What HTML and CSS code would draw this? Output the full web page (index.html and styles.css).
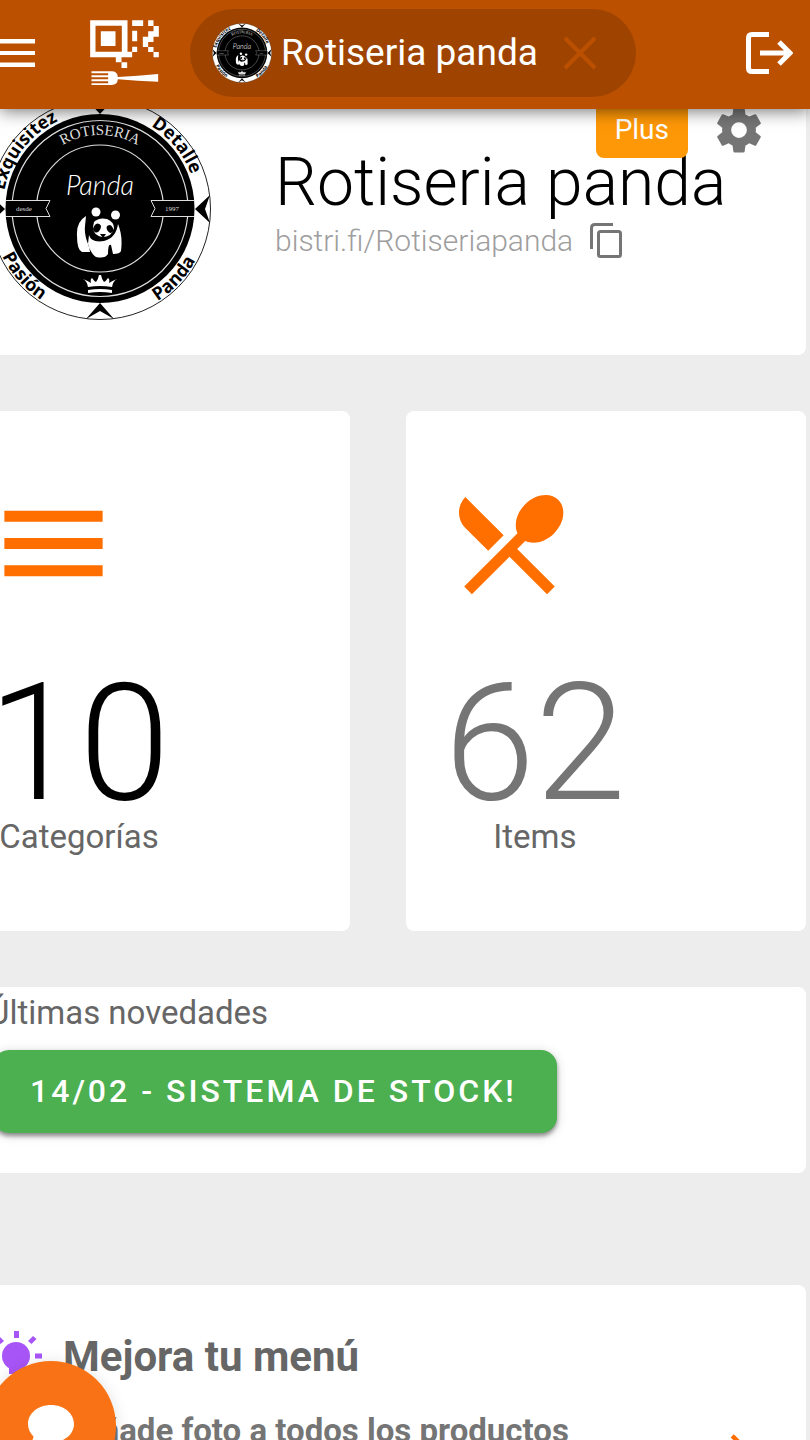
FILE: index.html
```html
<!DOCTYPE html>
<html lang="es">
<head>
<meta charset="utf-8">
<meta name="viewport" content="width=device-width, initial-scale=1">
<title>Rotiseria panda</title>
<link rel="stylesheet" href="styles.css">
</head>
<body>
<header class="app-bar">
  <button class="icon-button" type="button" aria-label="Menú">
    <svg width="35" height="30" viewBox="0 0 35 30" fill="#fff"><path d="M0 1h35v4.500H0zM0 13h35v4H0zM0 24.500h35v4.500H0z"/></svg>
  </button>
  <a class="brand" href="#" aria-label="Inicio">
    <svg width="69" height="66" viewBox="272 62 206 198" fill="#fff">
      <path fill-rule="evenodd" d="M272 63h112v94h14v17H272zM288 79v78h79V79z"/>
      <path d="M304 96h44v44h-44zM349 173h17v16h-17zM366 189h17v17h-17zM398 63h33v17h-33zM446 63h16v17h-16zM462 80h16v16h-16zM398 94h15v32h-15zM446 96h32v16h-16v16h-16v15h-16v-31h16zM446 143h16v15h-16zM462 158h16v16h-16zM398 142h15v16h-15z"/>
      <path d="M276 216h60q18 0 19 17l60-4 61-5v23l-61-3-60-4q-1 17-19 17h-60v-5h50v-6h-50v-6h50v-6h-50v-6h50v-6h-50z"/>
    </svg>
  </a>
  <div class="shop-chip">
    <svg class="avatar" viewBox="-12 97 224 224" aria-hidden="true"><use href="#emblem"/></svg>
    <span class="shop-name">Rotiseria panda</span>
    <button class="icon-button" type="button" aria-label="Quitar">
      <svg width="34" height="34" viewBox="0 0 34 34" fill="none" stroke="#ba5000" stroke-width="4"><path d="M2 2l30 30M32 2L2 32"/></svg>
    </button>
  </div>
  <button class="icon-button logout" type="button" aria-label="Salir">
    <svg width="48" height="44" viewBox="0 0 48 44" fill="none" stroke="#fff" stroke-width="5"><path d="M24 3.500H7Q3.500 3.500 3.500 7v30q0 3.500 3.500 3.500h17M15 22h28M34 11l11 11-11 11"/></svg>
  </button>
</header>

<main class="page">
  <section class="card profile">
    <svg class="logo" viewBox="-11 98 222 222" role="img" aria-label="Rotiseria panda">
      <defs>
        <path id="arc-top" d="M26 209a74 74 0 0 1 148 0"/>
        <path id="arc-outer" d="M2.500 209a97.500 97.500 0 0 1 195 0"/>
        <path id="arc-under" d="M-8.500 209a108.500 108.500 0 0 0 217 0"/>
      </defs>
      <g id="emblem">
        <circle cx="100" cy="209" r="110.500" fill="#fff" stroke="#222"/>
        <circle cx="100" cy="208.500" r="94.500"/>
        <g fill="none" stroke="#ddd" stroke-width="1.200">
          <circle cx="100" cy="208.500" r="88"/>
          <circle cx="100" cy="208.500" r="63.500"/>
        </g>
        <path d="M6 200.500h44l-4 8 4 8H6M194 200.500h-43l4 8-4 8h43" fill="#000" stroke="#ddd"/>
        <path d="M210 195l-15 14 15 14-5-14zM-10 195l15 14-15 14 5-14zM86 319l14-16 14 16-14-8zM86 99l14 15 14-15-14 7z"/>
        <text class="seal-caps" text-anchor="middle"><textPath href="#arc-top" startOffset="50%">ROTISERIA</textPath></text>
        <text class="seal-word" text-anchor="middle"><textPath href="#arc-outer" startOffset="21%">Exquisitez</textPath></text>
        <text class="seal-word" text-anchor="middle"><textPath href="#arc-outer" startOffset="78%">Detalle</textPath></text>
        <text class="seal-word" text-anchor="middle"><textPath href="#arc-under" startOffset="23%">Pasión</textPath></text>
        <text class="seal-word" text-anchor="middle"><textPath href="#arc-under" startOffset="76%">Panda</textPath></text>
        <text class="seal-name" x="100" y="195" text-anchor="middle">Panda</text>
        <text class="seal-small" x="24" y="211" text-anchor="middle">desde</text>
        <text class="seal-small" x="172" y="211" text-anchor="middle">1997</text>
        <path fill="#fff" d="M86 216q-10 6-9 20 0 14 5 16h8l-1-6q-5-10-4-20zM89 235q2 8 15 6 12-3 14-17 5 12 3 27-1 3-8 3l-2-9q-3-2-3 9-3 5-12 3-5-3-8-13z"/>
        <circle cx="96" cy="212" r="4.500" fill="#fff"/><circle cx="115.500" cy="215" r="4.500" fill="#fff"/>
        <path fill="#fff" d="M94 222q5-5 13-3 7 3 7 9-2 9-12 9-9-2-9-10z"/>
        <ellipse cx="97" cy="228" rx="3.500" ry="4.500" transform="rotate(30 97 228)"/><ellipse cx="110" cy="229" rx="3" ry="4" transform="rotate(-30 110 229)"/><path d="M100 234h6l-3 4z"/>
        <path fill="#fff" d="M88 287q-1-6-5-8 5 2 8 4-1-4 1-5 2 3 4 4 2-2 3-7h2q1 5 3 7 2-1 4-4 2 1 1 5 3-2 8-4-4 2-5 8-12-2-24 0zM88 290q12-2 24 0v3q-12-2-24 0z"/>
      </g>
    </svg>
    <div class="profile-info">
      <h1 class="profile-name">Rotiseria panda</h1>
      <div class="profile-link">
        <a class="url" href="#">bistri.fi/Rotiseriapanda</a>
        <button class="icon-button" type="button" aria-label="Copiar enlace">
          <svg width="32" height="36" viewBox="0 0 32 36" fill="none" stroke="#757575" stroke-width="3"><path d="M1.500 26V5q0-3.500 3.500-3.500h18"/><rect x="8.500" y="8.500" width="22" height="25" rx="2"/></svg>
        </button>
      </div>
    </div>
    <div class="profile-tools">
      <span class="plan">Plus</span>
      <button class="icon-button" type="button" aria-label="Configuración">
        <svg width="54" height="54" viewBox="0 0 24 24" fill="#757575"><path d="M12 15.500A3.500 3.500 0 0 1 8.500 12 3.500 3.500 0 0 1 12 8.500a3.500 3.500 0 0 1 3.500 3.500 3.500 3.500 0 0 1-3.500 3.500m7.430-2.530c.04-.32.07-.64.07-.97s-.03-.66-.07-1l2.110-1.630c.19-.15.24-.42.12-.64l-2-3.460c-.12-.22-.39-.31-.61-.22l-2.490 1c-.52-.39-1.060-.73-1.690-.98l-.37-2.650A.506.506 0 0 0 14 2h-4c-.25 0-.46.18-.5.42l-.37 2.650c-.63.25-1.170.59-1.690.98l-2.490-1c-.22-.09-.49 0-.61.220l-2 3.460c-.13.220-.07.490.12.640L4.570 11c-.04.340-.07.670-.07 1s.03.650.07.970l-2.110 1.660c-.19.150-.25.420-.12.640l2 3.460c.12.220.39.300.61.220l2.490-1.010c.52.400 1.060.740 1.690.990l.37 2.650c.04.240.25.420.5.420h4c.25 0 .46-.18.5-.42l.37-2.650c.63-.26 1.170-.59 1.690-.99l2.490 1.010c.22.080.49 0 .61-.22l2-3.460c.12-.22.07-.49-.12-.64z"/></svg>
      </button>
    </div>
  </section>

  <div class="stats">
    <section class="card stat">
      <div class="stat-body">
        <svg class="stat-icon" viewBox="0 0 24 24"><path d="M3 6h18v2H3zM3 11h18v2H3zM3 16h18v2H3z"/></svg>
        <strong class="stat-value stat-value-dark">10</strong>
        <span class="label">Categorías</span>
      </div>
    </section>
    <section class="card stat">
      <div class="stat-body">
        <svg class="stat-icon" viewBox="0 0 24 24"><path d="M8.100 13.340l2.830-2.830L3.910 3.500a4.008 4.008 0 0 0 0 5.660l4.190 4.180zm6.780-1.810c1.530.71 3.680.21 5.270-1.380 1.910-1.910 2.280-4.650.81-6.120-1.460-1.460-4.200-1.100-6.120.81-1.590 1.590-2.090 3.740-1.380 5.270L3.700 19.870l1.410 1.410L12 14.410l6.880 6.880 1.410-1.410L13.410 13l1.470-1.470z"/></svg>
        <strong class="stat-value">62</strong>
        <span class="label">Items</span>
      </div>
    </section>
  </div>

  <section class="card news">
    <h2 class="label">Últimas novedades</h2>
    <button class="news-button" type="button">14/02 - SISTEMA DE STOCK!</button>
  </section>

  <section class="card tips">
    <h2 class="tips-title">
      <svg width="54" height="54" viewBox="0 0 54 54" fill="#a855f7"><circle cx="27" cy="27" r="14"/><path d="M20 36h14v9H20zM25 2h5v7h-5zM46 24.500h7v5h-7zM1 24.500h7v5H1zM39 12l5-5 3.500 3-5 5zM15 12l-5-5-3.500 3 5 5z"/></svg>
      Mejora tu menú
    </h2>
    <a class="tip" href="#">
      <span>Añade foto a todos los productos</span>
      <svg class="tip-arrow" viewBox="0 0 24 24"><path d="M4 11v2h12l-5.500 5.500 1.420 1.420L19.840 12l-7.920-7.920L10.500 5.500 16 11z"/></svg>
    </a>
  </section>
</main>

<button class="chat" type="button" aria-label="Chat">
  <svg width="48" height="44" viewBox="0 0 48 44" fill="#fff"><path d="M24 1C11 1 1 9.500 1 20c0 5 2 9 5.500 12.500C6 37 3 40 1 42c6 0 11-2 15-4.500 2.500.7 5 1 8 1 13 0 23-8 23-18.500S37 1 24 1z"/></svg>
</button>
</body>
</html>
```

FILE: styles.css
```css
* {
  box-sizing: border-box;
}

body {
  margin: 0;
  height: 100vh;
  overflow: hidden;
  background: #ededed;
  color: #666;
  font-family: Roboto, "Liberation Sans", sans-serif;
}

svg {
  display: block;
  flex: none;
}

h1,
h2 {
  margin: 0;
  font-weight: 400;
}

a {
  color: inherit;
  text-decoration: none;
}

button {
  font: inherit;
  border: 0;
  cursor: pointer;
}

.icon-button {
  padding: 0;
  background: none;
}

/* Top bar */
.app-bar {
  position: fixed;
  inset: 0 0 auto 0;
  z-index: 2;
  display: flex;
  align-items: center;
  height: 109px;
  padding: 0 17px 3px 0;
  background: #ba5000;
  box-shadow: 0 2px 16px rgba(0, 0, 0, 0.55);
}

.brand {
  margin: 0 31px 0 55px;
}

.shop-chip {
  display: flex;
  align-items: center;
  height: 88px;
  padding: 0 39px 0 22px;
  border-radius: 44px;
  background: #9f4400;
  color: #fff;
}

.avatar {
  width: 60px;
  height: 60px;
}

.shop-name {
  margin: 0 25px 0 9px;
  font-size: 37px;
  line-height: 44px;
  white-space: nowrap;
}

.logout {
  margin-left: auto;
}

/* Page */
.page {
  height: 100%;
  margin-left: -50px;
  padding-right: 4px;
  overflow-y: auto;
  scrollbar-width: none;
}

.card {
  border-radius: 8px;
  background: #fff;
}

.profile {
  position: relative;
  display: flex;
  gap: 64px;
  padding: 98px 0 35px 39px;
}

.logo {
  width: 222px;
  height: 222px;
}

.seal-caps {
  fill: #ddd;
  font: 15px "Liberation Serif", serif;
}

.seal-word {
  font: 700 18px "Open Sans", sans-serif;
}

.seal-name {
  fill: #fff;
  font: italic 27px Lato, sans-serif;
  font-weight: 300;
}

.seal-small {
  fill: #ddd;
  font: 7px "Liberation Serif", serif;
}

.profile-info {
  display: flex;
  flex-direction: column;
  gap: 8px;
  padding-top: 53px;
}

.profile-name {
  color: #000;
  font-size: 66px;
  font-weight: 300;
  line-height: 64px;
  white-space: nowrap;
}

.profile-link {
  display: flex;
  align-items: center;
  gap: 17px;
}

.url {
  color: #9e9e9e;
  font-size: 30px;
  font-weight: 300;
  line-height: 36px;
}

.profile-tools {
  position: absolute;
  top: 102px;
  right: 40px;
  display: flex;
  align-items: center;
  gap: 24px;
}

.plan {
  padding: 0 19px;
  border-radius: 8px;
  background: #ff9807;
  color: #fff;
  font-size: 28px;
  line-height: 56px;
}

/* Counters */
.stats {
  display: grid;
  grid-template-columns: 1fr 1fr;
  gap: 56px;
  margin: 56px 0;
}

.stat {
  padding: 67px 38px 78px;
}

.stat-body {
  display: inline-flex;
  flex-direction: column;
  align-items: center;
}

.stat-icon {
  width: 131px;
  height: 131px;
  margin-bottom: 56px;
  align-self: flex-start;
  fill: #ff6f00;
}

.stat-value {
  color: #757575;
  font-size: 164px;
  font-weight: 300;
  line-height: 156px;
}

.stat-value-dark {
  color: #000;
}

.label {
  font-size: 33px;
  line-height: 32px;
}

/* News */
.news {
  display: flex;
  flex-direction: column;
  align-items: flex-start;
  gap: 21px;
  padding: 10px 38px 40px;
}

.news-button {
  margin-left: 5px;
  padding: 0 40px 0 37px;
  border-radius: 16px;
  background: #4caf50;
  box-shadow: 0 3px 4px rgba(0, 0, 0, 0.4), 0 2px 12px rgba(0, 0, 0, 0.16);
  color: #fff;
  font-size: 32px;
  font-weight: 500;
  letter-spacing: 3px;
  line-height: 83px;
}

/* Tips */
.tips {
  margin-top: 112px;
  padding: 44px 45px 48px 39px;
}

.tips-title {
  display: flex;
  align-items: center;
  gap: 20px;
  font-size: 42px;
  font-weight: 700;
}

.tip {
  display: flex;
  align-items: flex-start;
  justify-content: space-between;
  padding: 28px 0 0 90px;
  color: #757575;
  font-size: 33px;
  font-weight: 700;
  line-height: 40px;
}

.tip-arrow {
  width: 54px;
  height: 54px;
  margin-top: 14px;
  fill: #ff6f00;
}

/* Chat launcher */
.chat {
  position: fixed;
  bottom: -51px;
  left: -14px;
  z-index: 3;
  display: grid;
  place-items: center;
  width: 130px;
  height: 130px;
  padding: 0;
  border-radius: 50%;
  background: #f97316;
  box-shadow: 0 2px 16px rgba(0, 0, 0, 0.12);
}
```
